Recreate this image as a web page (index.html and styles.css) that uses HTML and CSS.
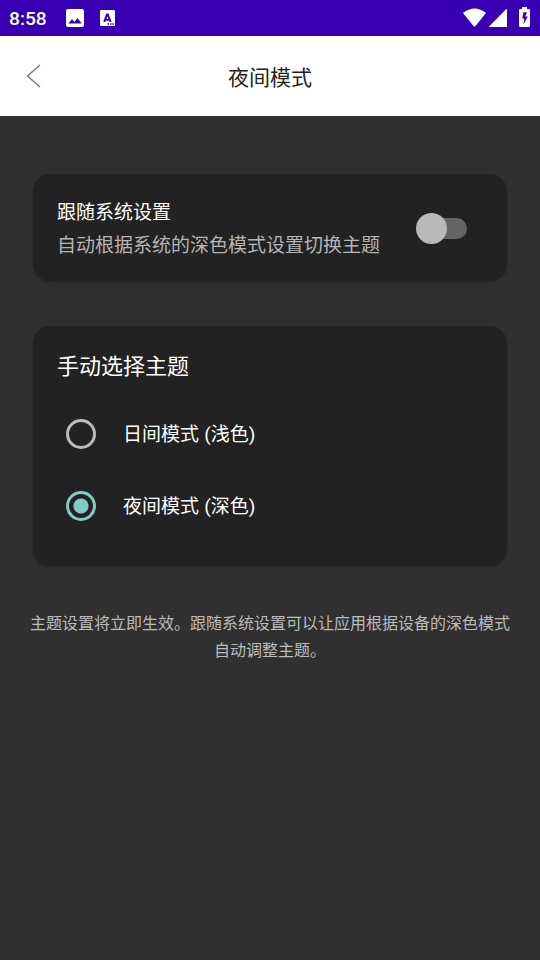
FILE: index.html
```html
<!DOCTYPE html>
<html lang="zh-CN">
<head>
<meta charset="utf-8">
<title>夜间模式</title>
<link rel="stylesheet" href="styles.css">
</head>
<body>
<div class="status">
  <span class="clock">8:58</span>
  <svg class="picture" width="18" height="18" viewBox="0 0 18 18"><path fill="#fff" fill-rule="evenodd" d="M2 0h14a2 2 0 0 1 2 2v14a2 2 0 0 1-2 2H2a2 2 0 0 1-2-2V2a2 2 0 0 1 2-2zM2.500 14.500h13.200L11.500 9l-3 4-2.500-3z"/></svg>
  <svg class="input" width="15" height="16" viewBox="0 0 15 16"><rect width="15" height="16" rx="1.300" fill="#fff"/><path d="M4.200 12 7 4.500h.8L10.600 12M5.200 9.700h4.400" fill="none" stroke="#3700b3" stroke-width="2"/><path d="M7.500 13.300H9v1.500H7.500zM10 13.300h1.500v1.500H10zM12.400 13.300h1.500v1.500h-1.500z" fill="#3700b3"/></svg>
  <svg class="wifi" width="23" height="19" viewBox="0 0 23 19"><path fill="#fff" d="M0 5Q11.500-4 23 5L12.300 18.200q-.8.800-1.600 0z"/></svg>
  <svg class="signal" width="18" height="18" viewBox="0 0 18 18"><path fill="#fff" d="M17 .3q1-.6 1 .7v17H1q-1.500 0-.5-1z"/></svg>
  <svg class="battery" width="11" height="20" viewBox="0 0 11 20"><path fill="#fff" fill-rule="evenodd" d="M3 0h5v2h2q1 0 1 1.300v15.200q0 1.500-1.300 1.500H1.300Q0 20 0 18.500V3.300Q0 2 1 2h2zM4.500 5.200 3.200 11.500h2L4.500 17.200 8.800 9.500H6.200L8 5.200z"/></svg>
</div>
<header class="bar">
  <svg class="back" width="15" height="24" viewBox="0 0 15 24"><path d="M14 1 1.500 12 14 23" fill="none" stroke="#777" stroke-width="1.400"/></svg>
  <h1 class="title">夜间模式</h1>
</header>
<main class="content">
  <section class="card follow">
    <div class="copy"><div class="name">跟随系统设置</div><div class="desc">自动根据系统的深色模式设置切换主题</div></div>
    <div class="switch"><span class="thumb"></span></div>
  </section>
  <section class="card themes">
    <h2 class="heading">手动选择主题</h2>
    <div class="option"><span class="radio"></span><span class="label">日间模式 (浅色)</span></div>
    <div class="option"><span class="radio checked"></span><span class="label">夜间模式 (深色)</span></div>
  </section>
  <p class="note">主题设置将立即生效。跟随系统设置可以让应用根据设备的深色模式自动调整主题。</p>
</main>
</body>
</html>
```
FILE: styles.css
```css
* { box-sizing: border-box; }
body { margin: 0; height: 960px; overflow: hidden; background: #303030; color: #fff; font-family: Roboto, "Noto Sans CJK SC", sans-serif; }
.status { height: 36px; background: #3700b3; display: flex; align-items: center; padding: 0 10px 0 9px; }
.clock { width: 57px; font-size: 19.2px; font-weight: 500; padding-top: 1px; }
.input { margin-left: 16px; }
.wifi { margin-left: auto; margin-top: -2px; }
.signal { margin-left: 3px; }
.battery { margin-left: 12px; margin-top: -2px; }
.bar { height: 80px; background: #fff; display: grid; grid-template-columns: 60px 1fr 60px; align-items: center; }
.back { margin-left: 26px; }
.title { margin: 4px 0 0; color: #222; font-size: 21px; font-weight: 400; line-height: 32px; text-align: center; }
.content { padding: 58px 24px 0; }
.card { margin: 0 9px; background: #222; border-radius: 18px; box-shadow: 0 1px 3px #0004; }
.follow { height: 107px; display: flex; align-items: center; justify-content: space-between; padding: 2px 40px 0 24px; }
.copy { padding-top: 1px; }
.name { font-size: 19px; line-height: 32px; }
.desc { font-size: 19px; line-height: 33px; color: #b5b5b5; white-space: nowrap; }
.switch { width: 51px; height: 31px; display: flex; align-items: center; justify-content: flex-end; }
.switch::before { content: ""; width: 42px; height: 21px; flex: none; border-radius: 11px; background: #646464; }
.thumb { width: 31px; height: 31px; flex: none; order: -1; margin-right: -22px; z-index: 1; border-radius: 50%; background: #b9b9b9; }
.themes { height: 240px; margin-top: 45px; padding: 25px 24px; }
.heading { margin: 0 0 23px; font-size: 22px; font-weight: 400; line-height: 32px; }
.option { height: 56px; margin-bottom: 16px; display: flex; align-items: center; font-size: 19px; word-spacing: .6px; }
.label { padding-bottom: 4px; }
.radio { width: 30px; height: 30px; margin: 0 27px 0 9px; border: 3px solid #bcbcbc; border-radius: 50%; }
.checked { border-color: #80cbc4; background: radial-gradient(circle, #80cbc4 7px, transparent 8px); }
.note { margin: 44px 0 0; font-size: 16px; line-height: 27px; color: #bcbcbc; text-align: center; }
```
